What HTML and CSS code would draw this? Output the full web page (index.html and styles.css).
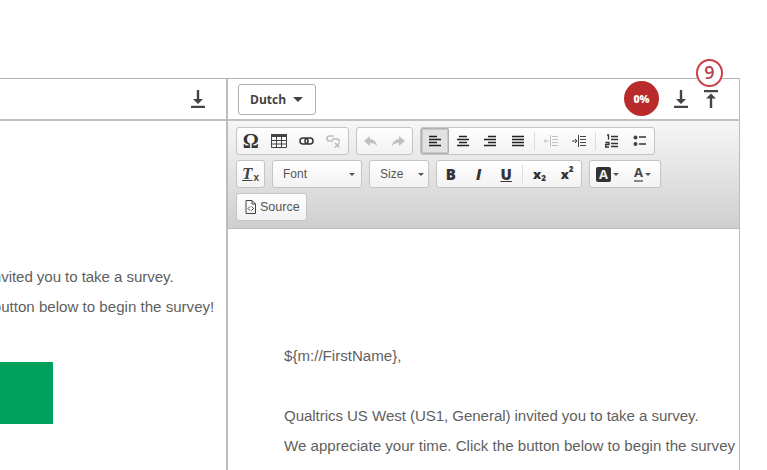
FILE: index.html
```html
<!DOCTYPE html>
<html lang="en">
<head>
<meta charset="utf-8">
<title>Survey email translation</title>
<link rel="stylesheet" href="styles.css">
</head>
<body>
<main class="compare">
  <section class="pane pane-left">
    <header class="pane-head head-left">
      <button class="icon-btn" aria-label="Download">
        <svg width="16" height="20" viewBox="0 0 16 20"><path class="solid" d="M6.800 1h2.400v9H13l-5 5-5-5h3.800zM1 16.800h14V19H1z"/></svg>
      </button>
    </header>
    <div class="message message-left">
      <p class="line">${m://FirstName},</p>
      <p class="line gap tight">Qualtrics US West (US1, General) invited you to take a survey.</p>
      <p class="line">We appreciate your time. Click the button below to begin the survey!</p>
      <div class="cta"></div>
    </div>
  </section>

  <section class="pane pane-right">
    <header class="pane-head head-right">
      <button class="lang">Dutch <span class="lang-caret"></span></button>
      <div class="head-tools">
        <span class="badge">0%</span>
        <button class="icon-btn" aria-label="Download">
          <svg width="16" height="20" viewBox="0 0 16 20"><path class="solid" d="M6.800 1h2.400v9H13l-5 5-5-5h3.800zM1 16.800h14V19H1z"/></svg>
        </button>
        <button class="icon-btn" aria-label="Upload">
          <svg width="16" height="20" viewBox="0 0 16 20"><path class="solid" d="M1 1h14v2.200H1zM8 4.500l5 5H9.200V19H6.800V9.500H3z"/></svg>
        </button>
      </div>
      <span class="callout">9</span>
    </header>

    <div class="toolbar">
      <div class="tb-row">
        <div class="group">
          <span class="tb omega">Ω</span>
          <span class="tb"><svg width="18" height="16" viewBox="0 0 18 16"><path class="solid" d="M1 1h16v3H1z"/><path class="line-i" d="M1.500 4v10.500h15V4M1.500 7.500h15M1.500 11h15M6.500 4v10.500M11.500 4v10.500"/></svg></span>
          <span class="tb"><svg width="15" height="8" viewBox="0 0 15 8"><rect class="thick" x="1" y="1" width="8" height="6" rx="3"/><rect class="thick" x="6" y="1" width="8" height="6" rx="3"/></svg></span>
          <span class="tb dim"><svg width="15" height="13" viewBox="0 0 15 13"><path class="thick" d="M8 1H3.500a2.500 2.500 0 0 0 0 5H7M6 4h5.500a2 2 0 0 1 1.500 3"/><path class="thick" d="m9 8 4.500 4.500M13.500 8 9 12.500"/></svg></span>
        </div>
        <div class="group">
          <span class="tb dim"><svg width="16" height="12" viewBox="0 0 16 12"><path class="solid" d="M7 1 1 6l6 5V8c3 0 5 .6 7 3-.5-4-3-6.500-7-7z"/></svg></span>
          <span class="tb dim"><svg width="16" height="12" viewBox="0 0 16 12"><path class="solid" d="m9 1 6 5-6 5V8c-3 0-5 .6-7 3 .5-4 3-6.500 7-7z"/></svg></span>
        </div>
        <div class="group">
          <span class="tb active"><svg width="14" height="12" viewBox="0 0 14 12"><path class="bars" d="M1 1.500h8M1 4.500h12M1 7.500h8M1 10.500h12"/></svg></span>
          <span class="tb"><svg width="14" height="12" viewBox="0 0 14 12"><path class="bars" d="M3 1.500h8M1 4.500h12M3 7.500h8M1 10.500h12"/></svg></span>
          <span class="tb"><svg width="14" height="12" viewBox="0 0 14 12"><path class="bars" d="M5 1.500h8M1 4.500h12M5 7.500h8M1 10.500h12"/></svg></span>
          <span class="tb"><svg width="14" height="12" viewBox="0 0 14 12"><path class="bars" d="M1 1.500h12M1 4.500h12M1 7.500h12M1 10.500h12"/></svg></span>
          <span class="sep"></span>
          <span class="tb dim"><svg width="14" height="12" viewBox="0 0 14 12"><path class="thin" d="M6.500 0v12M8 1.500h6M8 4.500h6M8 7.500h6M8 10.500h6M5 6H0M2 4 0 6l2 2"/></svg></span>
          <span class="tb"><svg width="14" height="12" viewBox="0 0 14 12"><path class="thin" d="M6.500 0v12M8 1.500h6M8 4.500h6M8 7.500h6M8 10.500h6M0 6h5M3 4l2 2-2 2"/></svg></span>
          <span class="sep"></span>
          <span class="tb"><svg width="14" height="14" viewBox="0 0 14 14"><path class="list" d="M2 1h1.500v4.500M6 2.500h7M6 5.500h7M.5 8.500h3.500V10.500H.5v2.500H4M6 9.500h7M6 12.500h7"/></svg></span>
          <span class="tb"><svg width="14" height="12" viewBox="0 0 14 12"><circle class="solid" cx="2.500" cy="2.500" r="2"/><circle class="solid" cx="2.500" cy="9" r="2"/><path class="list" d="M6 2h7M6 9h7"/></svg></span>
        </div>
      </div>

      <div class="tb-row">
        <div class="group">
          <span class="tb clear"><i>T</i><small>x</small></span>
        </div>
        <div class="combo combo-font"><span>Font</span><span class="caret"></span></div>
        <div class="combo combo-size"><span>Size</span><span class="caret"></span></div>
        <div class="group">
          <span class="tb fmt bold">B</span>
          <span class="tb fmt ital">I</span>
          <span class="tb fmt under">U</span>
          <span class="sep"></span>
          <span class="tb fmt script">x<sub>2</sub></span>
          <span class="tb fmt script">x<sup>2</sup></span>
        </div>
        <div class="group">
          <span class="tb color"><span class="a-box">A</span><span class="caret"></span></span>
          <span class="tb color"><span class="a-line">A</span><span class="caret"></span></span>
        </div>
      </div>

      <div class="tb-row">
        <div class="group">
          <span class="tb source">
            <svg width="13" height="14" viewBox="0 0 13 14"><path class="thin" d="M2 .5h6l3.500 3.500v9.500H2zM8 .5V4h3.500M6 6.500 4 8.500l2 2M7.500 6.500l2 2-2 2"/></svg>
            Source
          </span>
        </div>
      </div>
    </div>

    <div class="message message-right">
      <p class="line">${m://FirstName},</p>
      <p class="line gap tight">Qualtrics US West (US1, General) invited you to take a survey.</p>
      <p class="line">We appreciate your time. Click the button below to begin the survey</p>
    </div>
  </section>
</main>
</body>
</html>
```

FILE: styles.css
```css
* { box-sizing: border-box; }
html, body { margin: 0; height: 100%; overflow: hidden; background: #fff; }
body { font-family: "Liberation Sans", Arial, sans-serif; color: #5a5a5a; }

.compare { display: flex; height: 470px; padding-top: 78px; }
.pane { overflow: hidden; height: 392px; border-top: 1px solid #b4b4b4; }
.pane-left { width: 226px; }
.pane-right { width: 514px; border-left: 2px solid #bcbcbc; border-right: 1px solid #bcbcbc; overflow: visible; position: relative; }

.pane-head { height: 42px; display: flex; align-items: center; border-bottom: 2px solid #c0c0c0; background: #fff; }
.head-left { justify-content: flex-end; padding-right: 20px; }
.head-right { justify-content: space-between; padding: 0 20px 0 10px; }
.head-tools { display: flex; align-items: center; }

.icon-btn { border: 0; padding: 0; background: none; height: 20px; width: 16px; display: block; }
.icon-btn svg { display: block; }
.head-tools .icon-btn { margin-left: 14px; }

.solid { fill: #444; stroke: none; }
.line-i { fill: none; stroke: #444; stroke-width: 1; }
.thick { fill: none; stroke: #333; stroke-width: 1.500; }
.thin { fill: none; stroke: #444; stroke-width: 1; }
.bars { fill: none; stroke: #222; stroke-width: 1.500; }
.list { fill: none; stroke: #333; stroke-width: 1.300; }

.lang { width: 78px; height: 31px; padding: 0 0 0 11px; display: flex; align-items: center; gap: 7px; background: #fff; border: 1px solid #b0b0b0; border-radius: 3px; font: 700 12px "Open Sans", sans-serif; color: #444; }
.lang-caret { width: 0; height: 0; border-left: 5px solid transparent; border-right: 5px solid transparent; border-top: 5px solid #444; }

.badge { width: 35px; height: 35px; margin-top: -1px; border-radius: 50%; background: #b92b2b; color: #fff; font: 800 10.500px "Open Sans", sans-serif; display: flex; align-items: center; justify-content: center; }

.callout { position: absolute; left: 468px; top: -20px; width: 27px; height: 28px; border: 2.500px solid #c8404a; border-radius: 50%; background: #fff; color: #b5404a; font: 600 18px/23px "Open Sans", sans-serif; text-align: center; }

.toolbar { height: 108px; padding: 6px 0 0 8px; background: linear-gradient(#f6f6f6, #cfcfcf); border-bottom: 1px solid #bcbcbc; display: flex; flex-direction: column; gap: 5px; }
.tb-row { display: flex; gap: 7px; height: 28px; }
.group { display: flex; align-items: stretch; height: 28px; background: linear-gradient(#fff, #f2f2f2); border: 1px solid #c4c4c4; border-radius: 3px; }
.tb { width: 27.700px; display: flex; align-items: center; justify-content: center; color: #444; }
.tb.dim svg { opacity: .3; }
.tb.active { background: #e2e2e2; box-shadow: inset 0 0 0 1.500px #b0b0b0; border-radius: 2px; }
.sep { width: 1px; margin: 4px 2.250px; background: #dcdcdc; }

.omega { font: 700 20px "Liberation Serif", serif; color: #333; }

.tb.clear { width: 27px; font: 700 italic 17px "Liberation Serif", serif; color: #444; }
.clear i { text-decoration: underline; }
.clear small { font: 700 10px "Liberation Sans", sans-serif; margin: 7px 0 0 1px; }

.combo { display: flex; align-items: center; justify-content: space-between; height: 28px; padding: 0 6px 0 10px; background: linear-gradient(#fff, #f2f2f2); border: 1px solid #c4c4c4; border-radius: 3px; font-size: 12px; color: #555; }
.combo-font { width: 90px; }
.combo-size { width: 60px; padding-right: 4px; }
.caret { width: 0; height: 0; border-left: 3px solid transparent; border-right: 3px solid transparent; border-top: 3px solid #555; }

.fmt { font-size: 15px; font-weight: 800; color: #333; font-family: "Open Sans", sans-serif; }
.ital { font-style: italic; }
.under { text-decoration: underline; }
.script { font-size: 13px; }
.script sub, .script sup { font-size: 8px; line-height: 0; vertical-align: baseline; position: relative; }
.script sub { top: 4px; }
.script sup { top: -5px; }

.color { gap: 2px; font: 700 13px "Open Sans", sans-serif; width: 35px; }
.a-box { width: 15px; height: 15px; background: #333; color: #eee; border-radius: 2px; display: flex; align-items: center; justify-content: center; }
.a-line { border-bottom: 2px solid #888; line-height: 13px; height: 16px; }

.tb.source { width: auto; padding: 0 6px 0 7px; gap: 3px; font-size: 12.500px; color: #555; }

.message { font-size: 15.100px; }
.line { margin: 0; line-height: 30px; white-space: nowrap; color: #5f5f5f; }
.tight { letter-spacing: -.07px; }
.gap { margin-top: 30px; }
.message-left { margin-left: -241px; padding-top: 81px; }
.message-right { padding: 112px 0 0 56px; overflow: hidden; }
.cta { width: 294px; height: 62px; margin-top: 40px; background: #00a15c; }
```
